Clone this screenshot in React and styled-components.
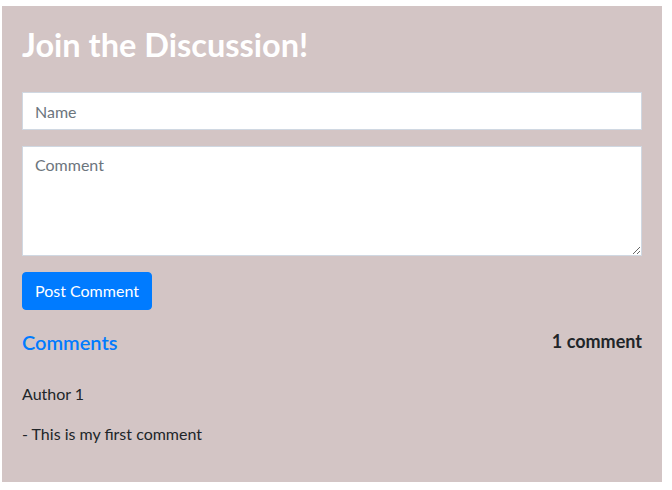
import React from 'react';
import styled, { createGlobalStyle } from 'styled-components';

const GlobalStyle = createGlobalStyle`
  * { box-sizing: border-box; }
  body {
    margin: 0;
    background: #fff;
    font-family: "Segoe UI", Lato, "Open Sans", sans-serif;
    color: #212529;
  }
`;

const Panel = styled.section`
  margin: 6px 10px 8px 2px;
  padding: 20px;
  background-color: #d3c5c5;
`;

const Title = styled.h1`
  margin: 0 0 28px;
  color: #fff;
  font-size: 32.5px;
  font-weight: 700;
  line-height: 38px;
`;

const Form = styled.form`
  display: flex;
  flex-direction: column;
  align-items: flex-start;
  gap: 16px;
`;

const field = `
  width: 100%;
  padding: 6px 12px;
  font-family: inherit;
  font-size: 16px;
  line-height: 1.5;
  color: #495057;
  background: #fff;
  border: 1px solid #d0d8e2;
  border-radius: 0;
  &::placeholder { color: #6c757d; }
`;

const Input = styled.input`
  ${field}
  height: 38px;
`;

const TextArea = styled.textarea`
  ${field}
  height: 110px;
  resize: vertical;
`;

const Button = styled.button`
  padding: 6px 12px;
  font-family: inherit;
  font-size: 16px;
  line-height: 1.5;
  color: #fff;
  background-color: #007bff;
  border: 1px solid #007bff;
  border-radius: 4px;
  cursor: pointer;
`;

const CommentsHeader = styled.div`
  display: flex;
  justify-content: space-between;
  align-items: center;
  margin-top: 20px;
`;

const CommentsTitle = styled.h3`
  margin: 0;
  color: #007bff;
  font-size: 20px;
  font-weight: 600;
  line-height: 1.2;
`;

const Count = styled.span`
  margin-top: -3px;
  font-size: 18px;
  font-weight: 700;
`;

const Comment = styled.div`
  margin-top: 28px;
`;

const Line = styled.p`
  margin: 0 0 16px;
  font-size: 16px;
  line-height: 1.5;
`;

const App = () => {
  return (
    <>
      <GlobalStyle />
      <Panel>
        <Title>Join the Discussion!</Title>
        <Form onSubmit={(e) => e.preventDefault()}>
          <Input type="text" placeholder="Name" />
          <TextArea placeholder="Comment" />
          <Button type="submit">Post Comment</Button>
        </Form>
        <CommentsHeader>
          <CommentsTitle>Comments</CommentsTitle>
          <Count>1 comment</Count>
        </CommentsHeader>
        <Comment>
          <Line>Author 1</Line>
          <Line>- This is my first comment</Line>
        </Comment>
      </Panel>
    </>
  );
};

export default App;
